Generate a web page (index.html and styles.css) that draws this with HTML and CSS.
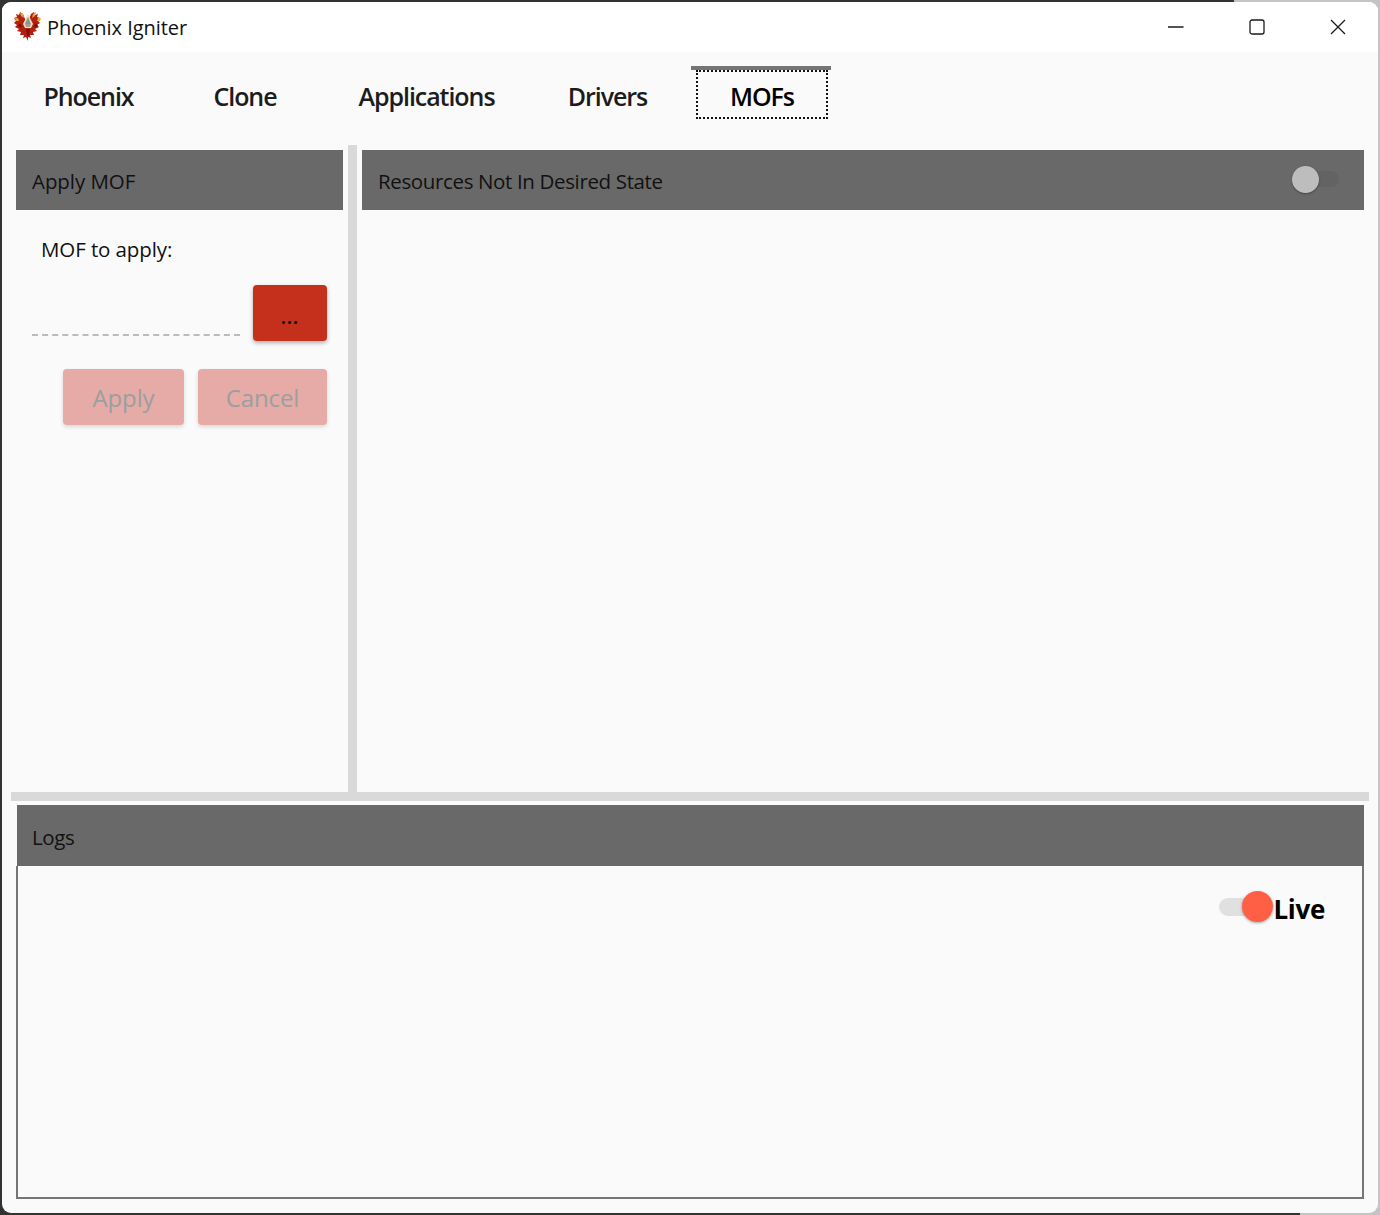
FILE: index.html
```html
<!DOCTYPE html>
<html lang="en">
<head>
<meta charset="utf-8">
<title>Phoenix Igniter</title>
<link rel="stylesheet" href="styles.css">
</head>
<body>
<div class="desktop">
  <div class="window">
    <header class="titlebar">
      <svg class="logo" viewBox="0 0 28 30" aria-hidden="true">
        <path fill="#b3200f" d="M14 30l-2-4-3 1 1-3-4 0 1-3-4-1 2-2-4-2 2-2-3-2 2-2-2-3 3-1-1-3 3 1 1-3 3 2 2 5 1 4 2 0 1-4 2-5 3-2 1 3 3-1-1 3 3 1-2 3 2 2-3 2 2 2-4 2 2 2-4 1 1 3-4 0 1 3-3-1z"/>
        <path fill="#e9a33d" d="M6 1l3 2 1 4-3-2zM22 1l-3 2-1 4 3-2zM1 7l3 0 1 3-3 0zM27 7l-3 0-1 3 3 0z"/>
        <path fill="#f6dcc0" d="M14 3l5 10-2 4-6 0-2-4z"/>
        <path fill="#7f9a8f" d="M14 6l3 7-6 0z"/>
        <path fill="#a9a08c" d="M11 13l6 0-1 3-4 0z"/>
        <path fill="#7e1208" d="M12 18l4 0-1 7-2 0zM6 12l2 3-1 2-3-2zM22 12l-2 3 1 2 3-2z"/>
      </svg>
      <span class="app-title">Phoenix Igniter</span>
      <div class="caption">
        <span class="cap-btn"><svg viewBox="0 0 16 16" class="cap-icon"><path d="M0 8h15.5"/></svg></span>
        <span class="cap-btn"><svg viewBox="0 0 16 16" class="cap-icon"><rect x="1" y="1" width="14" height="14" rx="2"/></svg></span>
        <span class="cap-btn"><svg viewBox="0 0 16 16" class="cap-icon"><path d="M1 1l14 14M15 1L1 15"/></svg></span>
      </div>
    </header>

    <nav class="tabs">
      <div class="tab">Phoenix</div>
      <div class="tab">Clone</div>
      <div class="tab">Applications</div>
      <div class="tab">Drivers</div>
      <div class="tab active"><span class="focus">MOFs</span></div>
    </nav>

    <main class="panes">
      <section class="left-pane">
        <div class="pane-head pane-head-left">Apply MOF</div>
        <div class="form">
          <div class="form-label">MOF to apply:</div>
          <div class="file-row">
            <div class="file-input"></div>
            <button class="btn btn-browse" type="button">...</button>
          </div>
          <div class="actions">
            <button class="btn btn-off btn-apply" type="button">Apply</button>
            <button class="btn btn-off btn-cancel" type="button">Cancel</button>
          </div>
        </div>
      </section>
      <div class="vsplit"></div>
      <section class="right-pane">
        <div class="pane-head pane-head-right">
          <span>Resources Not In Desired State</span>
          <span class="toggle-off"><span class="knob-off"></span></span>
        </div>
      </section>
    </main>

    <div class="hsplit"></div>

    <section class="logs">
      <div class="pane-head logs-head">Logs</div>
      <div class="logs-body">
        <span class="toggle-on"><span class="knob-on"></span></span>
        <span class="live">Live</span>
      </div>
    </section>
  </div>
</div>
</body>
</html>
```

FILE: styles.css
```css
* { box-sizing: border-box; }
html, body { margin: 0; padding: 0; }
body { font-family: "Open Sans", "Noto Sans", "Liberation Sans", sans-serif; color: #111; }

.desktop {
  width: 1380px;
  height: 1215px;
  padding: 2px;
  background:
    linear-gradient(#333, #333) no-repeat left bottom / 1300px 2px,
    linear-gradient(90deg, #333 0, #333 89.4%, #c4c4c4 89.4%, #c4c4c4 100%);
}
.window {
  height: 1211px;
  display: flex;
  flex-direction: column;
  background: #fafafa;
  border-radius: 9px;
  overflow: hidden;
}

.titlebar {
  height: 50px;
  flex: none;
  background: #fff;
  display: flex;
  align-items: center;
}
.logo { width: 28px; height: 30px; margin: 0 0 2px 12px; flex: none; }
.app-title { margin-left: 5px; font-size: 20px; letter-spacing: -0.05px; line-height: 50px; color: #111; padding-top: 2px; }
.caption { margin-left: auto; display: flex; height: 100%; }
.cap-btn { width: 81px; display: flex; align-items: center; justify-content: center; padding-bottom: 1px; }
.cap-icon { width: 16px; height: 16px; fill: none; stroke: #1a1a1a; stroke-width: 1.3; }

.tabs {
  flex: none;
  height: 79px;
  margin-top: 14px;
  padding-left: 14px;
  display: grid;
  grid-template-columns: 145px 168px 195px 167px 140px;
  align-items: start;
  font-size: 25px;
  font-weight: 600;
  letter-spacing: -1.05px;
  color: #1c1c1c;
}
.tab { height: 53px; display: flex; align-items: center; justify-content: center; padding-top: 7px; }
.tab.active { border-top: 4px solid #757575; padding: 0 3px 0 5px; color: #000; align-items: stretch; }
.focus { flex: 1; height: 49px; border: 2px dotted #111; display: flex; align-items: center; justify-content: center; padding-top: 3px; }

.panes { flex: none; height: 647px; display: flex; padding: 5px 14px 0; }
.left-pane { width: 327px; flex: none; }
.vsplit { width: 9px; margin: -5px 5px 0; background: #d9d9d9; flex: none; }
.right-pane { flex: 1; }

.pane-head {
  height: 60px;
  background: #696969;
  display: flex;
  align-items: center;
  padding: 1px 16px 0;
  font-size: 20.5px;
  letter-spacing: -0.36px;
  color: #111;
}
.pane-head-left { letter-spacing: -0.07px; }
.pane-head-right { justify-content: space-between; padding-right: 25px; }

.toggle-off { position: relative; width: 47px; height: 16px; margin-top: -3px; background: #636363; border-radius: 8px; }
.knob-off { position: absolute; left: 0; top: -5px; width: 27px; height: 27px; border-radius: 50%; background: #bdbdbd; box-shadow: 0 1px 2px rgba(0,0,0,.35); }

.form { padding: 0 16px; }
.form-label { margin: 26px 0 0 9px; font-size: 20.5px; line-height: 26px; letter-spacing: -0.1px; color: #111; }
.file-row { display: flex; align-items: flex-end; gap: 13px; margin-top: 23px; }
.file-input { width: 208px; height: 8px; border-bottom: 2px dashed #bbb; margin-bottom: 5px; }
.btn { border: 0; border-radius: 4px; font-family: inherit; padding: 0; }
.btn-browse { width: 74px; height: 56px; background: #c5301c; color: #111; font-size: 17px; font-weight: 700; letter-spacing: 1.2px; padding-top: 8px; box-shadow: 0 2px 4px rgba(0,0,0,.3); }
.actions { display: flex; justify-content: flex-end; gap: 14px; margin-top: 28px; }
.btn-off { height: 56px; background: #e6aba6; color: #9a9f9f; font-size: 24px; letter-spacing: -0.1px; box-shadow: 0 2px 4px rgba(0,0,0,.14); }
.btn-apply { width: 121px; }
.btn-cancel { width: 129px; }

.hsplit { flex: none; height: 9px; margin: 0 9px; background: #d9d9d9; }

.logs { flex: none; margin: 4px 14px 0; }
.logs-head { height: 61px; margin-left: 1px; padding: 3px 16px 0 15px; }
.logs-body {
  height: 333px;
  border: 2px solid #757575;
  border-top: 0;
  display: flex;
  justify-content: flex-end;
  align-items: flex-start;
  padding: 25px 37px 0 0;
}
.toggle-on { position: relative; width: 54px; height: 18px; margin-top: 7px; }
.toggle-on::before { content: ""; position: absolute; left: 0; top: 0; width: 40px; height: 18px; border-radius: 9px; background: #e0e0e0; }
.knob-on { position: absolute; left: 23px; top: -7px; width: 31px; height: 31px; border-radius: 50%; background: #ff5f45; box-shadow: 0 1px 3px rgba(0,0,0,.35); }
.live { font-size: 26px; font-weight: 700; line-height: 36px; letter-spacing: -0.3px; color: #000; }
```
